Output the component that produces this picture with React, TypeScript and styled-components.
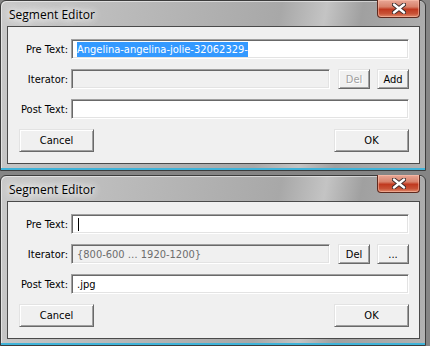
import styled, { createGlobalStyle } from 'styled-components'

const GlobalStyle = createGlobalStyle`
  html, body {
    margin: 0;
    padding: 0;
    background: #858585;
  }
  body {
    font-family: 'DejaVu Sans Condensed', 'DejaVu Sans', sans-serif;
    font-size: 11px;
    color: #000;
  }
`

const Stack = styled.div`
  display: flex;
  flex-direction: column;
  gap: 4px;
  width: 430px;
`

const Window = styled.section`
  box-sizing: border-box;
  width: 426px;
  height: 171px;
  display: flex;
  flex-direction: column;
  border: 1px solid #3c3c3c;
  border-radius: 6px 6px 0 0;
  background: linear-gradient(
    100deg,
    #c9c9c9 0%,
    #b9b9b9 30%,
    #a8a8a8 62%,
    #c4c4c4 72%,
    #a0a0a0 80%,
    #b2b2b2 100%
  );
  box-shadow: inset 0 -2px 0 #3fb3d9, inset 1px 1px 0 rgba(255, 255, 255, 0.5);
  padding: 0 5px 6px 6px;
`

const TitleBar = styled.header`
  height: 25px;
  display: flex;
  align-items: center;
  justify-content: space-between;
  padding-left: 2px;
`

const Title = styled.h1`
  margin: 0;
  font-family: 'Open Sans', 'DejaVu Sans', sans-serif;
  font-size: 12px;
  font-weight: 400;
  color: #000;
  text-shadow: 0 0 6px #fff, 0 0 10px #fff, 0 0 14px #fff;
  margin-top: 2px;
`

const CloseButton = styled.button`
  align-self: flex-start;
  width: 43px;
  height: 18px;
  margin-top: -1px;
  padding: 0;
  display: flex;
  align-items: center;
  justify-content: center;
  border: 1px solid #5e2a1f;
  border-top: none;
  border-radius: 0 0 4px 4px;
  background: linear-gradient(
    to bottom,
    #e9a796 0%,
    #d8826b 40%,
    #c0391f 55%,
    #c85236 80%,
    #e08a6c 100%
  );
  box-shadow: inset 0 0 0 1px rgba(255, 200, 180, 0.5);
`

const Client = styled.div`
  flex: 1;
  display: flex;
  flex-direction: column;
  background: #f0f0f0;
  border: 1px solid #4a4a4a;
  padding: 12px 10px 10px 0;
`

const Form = styled.div`
  display: grid;
  grid-template-columns: 60px 1fr;
  column-gap: 3px;
  row-gap: 10px;
`

const Label = styled.label`
  display: flex;
  align-items: center;
  justify-content: flex-end;
  height: 20px;
`

const Field = styled.div<{ $disabled?: boolean }>`
  box-sizing: border-box;
  height: 20px;
  flex: 1;
  display: flex;
  align-items: center;
  padding-left: 5px;
  white-space: nowrap;
  overflow: hidden;
  background: ${p => (p.$disabled ? '#f0f0f0' : '#fff')};
  color: ${p => (p.$disabled ? '#6d6d6d' : '#000')};
  border: 1px solid;
  border-color: #a0a0a0 #fff #fff #a0a0a0;
  box-shadow: inset 1px 1px 0 #696969, inset -1px -1px 0 #e3e3e3;
`

const Selected = styled.span`
  background: #3399ff;
  color: #fff;
  padding: 1px 0;
`

const Caret = styled.span`
  display: inline-block;
  width: 1px;
  height: 13px;
  background: #000;
  margin-left: 1px;
`

const IteratorRow = styled.div`
  display: flex;
  gap: 7px;
`

const Button = styled.button<{ $w?: number; $h?: number }>`
  box-sizing: border-box;
  width: ${p => p.$w ?? 75}px;
  height: ${p => p.$h ?? 23}px;
  padding: 0;
  font: inherit;
  color: #000;
  background: #f0f0f0;
  border: 1px solid;
  border-color: #e3e3e3 #696969 #696969 #e3e3e3;
  box-shadow: inset 1px 1px 0 #fff, inset -1px -1px 0 #a0a0a0;
  &:disabled {
    color: #a0a0a0;
    text-shadow: 1px 1px 0 #fff;
  }
`

const IterButtons = styled.div`
  display: flex;
  gap: 7px;
  margin-left: 1px;
`

const Footer = styled.div`
  display: flex;
  justify-content: space-between;
  margin-top: 10px;
  padding-left: 11px;
`

const CloseIcon = () => (
  <svg width="14" height="11" viewBox="0 0 14 11">
    <path
      d="M2 1.5 L12 9.5 M12 1.5 L2 9.5"
      stroke="#3a2a2a"
      strokeWidth="4.2"
      strokeLinecap="round"
    />
    <path
      d="M2 1.5 L12 9.5 M12 1.5 L2 9.5"
      stroke="#fff"
      strokeWidth="2.4"
      strokeLinecap="round"
    />
  </svg>
)

interface EditorProps {
  pre: React.ReactNode
  iterator?: string
  post: string
  delDisabled?: boolean
  extraLabel: string
}

const SegmentEditor = ({ pre, iterator, post, delDisabled, extraLabel }: EditorProps) => (
  <Window>
    <TitleBar>
      <Title>Segment Editor</Title>
      <CloseButton aria-label="Close">
        <CloseIcon />
      </CloseButton>
    </TitleBar>
    <Client>
      <Form>
        <Label>Pre Text:</Label>
        <Field>{pre}</Field>
        <Label>Iterator:</Label>
        <IteratorRow>
          <Field $disabled>{iterator}</Field>
          <IterButtons>
            <Button $w={32} $h={20} disabled={delDisabled}>
              Del
            </Button>
            <Button $w={32} $h={20}>
              {extraLabel}
            </Button>
          </IterButtons>
        </IteratorRow>
        <Label>Post Text:</Label>
        <Field>{post}</Field>
      </Form>
      <Footer>
        <Button>Cancel</Button>
        <Button>OK</Button>
      </Footer>
    </Client>
  </Window>
)

export default function App() {
  return (
    <>
      <GlobalStyle />
      <Stack>
        <SegmentEditor
          pre={<Selected>Angelina-angelina-jolie-32062329-</Selected>}
          post=""
          delDisabled
          extraLabel="Add"
        />
        <SegmentEditor
          pre={<Caret />}
          iterator="{800-600 … 1920-1200}"
          post=".jpg"
          extraLabel="..."
        />
      </Stack>
    </>
  )
}
